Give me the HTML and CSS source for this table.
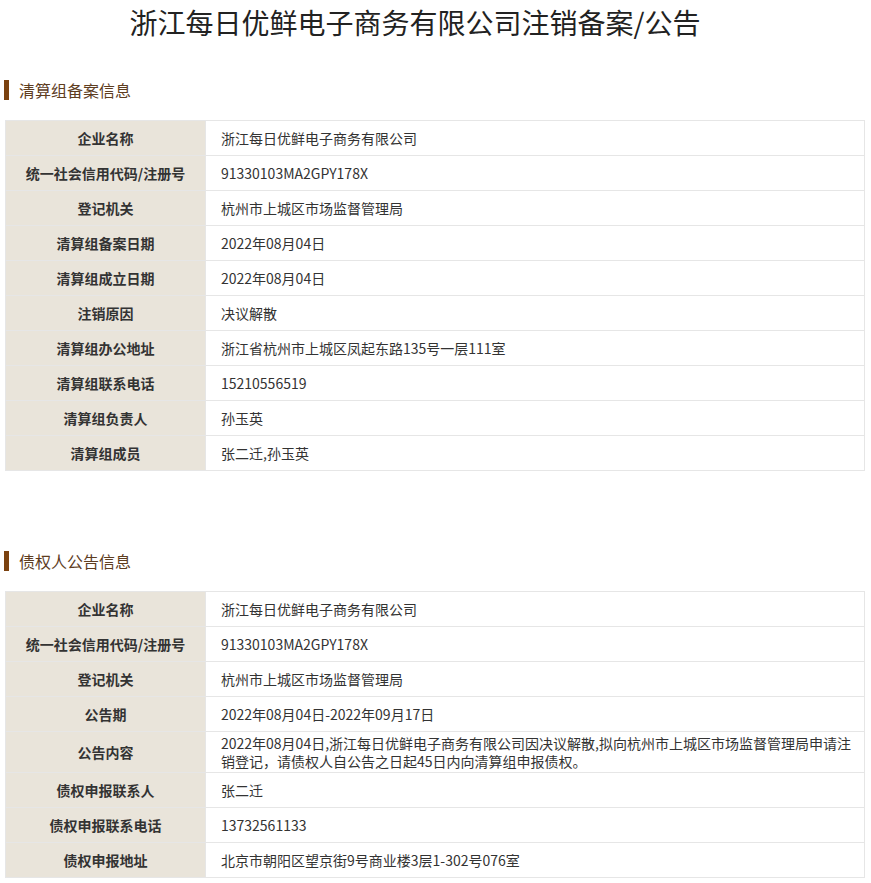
FILE: index.html
```html
<!DOCTYPE html>
<html lang="zh-CN">
<head>
  <meta charset="UTF-8">
  <title>浙江每日优鲜电子商务有限公司注销备案/公告</title>
  <link rel="stylesheet" href="styles.css">
</head>
<body>

  <h1 class="page-title">浙江每日优鲜电子商务有限公司注销备案/公告</h1>

  <!-- 清算组备案信息 -->
  <h2 class="section-title">清算组备案信息</h2>
  <table class="info-table">
    <tr><th>企业名称</th><td>浙江每日优鲜电子商务有限公司</td></tr>
    <tr><th>统一社会信用代码/注册号</th><td>91330103MA2GPY178X</td></tr>
    <tr><th>登记机关</th><td>杭州市上城区市场监督管理局</td></tr>
    <tr><th>清算组备案日期</th><td>2022年08月04日</td></tr>
    <tr><th>清算组成立日期</th><td>2022年08月04日</td></tr>
    <tr><th>注销原因</th><td>决议解散</td></tr>
    <tr><th>清算组办公地址</th><td>浙江省杭州市上城区凤起东路135号一层111室</td></tr>
    <tr><th>清算组联系电话</th><td>15210556519</td></tr>
    <tr><th>清算组负责人</th><td>孙玉英</td></tr>
    <tr><th>清算组成员</th><td>张二迁,孙玉英</td></tr>
  </table>

  <!-- 债权人公告信息 -->
  <h2 class="section-title second">债权人公告信息</h2>
  <table class="info-table">
    <tr><th>企业名称</th><td>浙江每日优鲜电子商务有限公司</td></tr>
    <tr><th>统一社会信用代码/注册号</th><td>91330103MA2GPY178X</td></tr>
    <tr><th>登记机关</th><td>杭州市上城区市场监督管理局</td></tr>
    <tr><th>公告期</th><td>2022年08月04日-2022年09月17日</td></tr>
    <tr><th>公告内容</th><td>2022年08月04日,浙江每日优鲜电子商务有限公司因决议解散,拟向杭州市上城区市场监督管理局申请注销登记，请债权人自公告之日起45日内向清算组申报债权。</td></tr>
    <tr><th>债权申报联系人</th><td>张二迁</td></tr>
    <tr><th>债权申报联系电话</th><td>13732561133</td></tr>
    <tr><th>债权申报地址</th><td>北京市朝阳区望京街9号商业楼3层1-302号076室</td></tr>
  </table>

</body>
</html>
```

FILE: styles.css
```css
body {
  margin: 0;
  font-family: "Noto Sans CJK SC", "Noto Sans", sans-serif;
  color: #333;
  background: #fff;
}

.page-title {
  width: 830px;
  margin: 0;
  padding-top: 2px;
  font-size: 28px;
  font-weight: normal;
  line-height: 40px;
  text-align: center;
  color: #222;
}

.section-title {
  margin: 38px 0 0 4px;
  padding-left: 10px;
  border-left: 5px solid #7b4210;
  font-size: 16px;
  font-weight: normal;
  line-height: 20px;
  color: #5e3d1f;
}

.section-title.second {
  margin-top: 80px;
}

.info-table {
  width: 860px;
  margin: 20px 0 0 5px;
  border-collapse: collapse;
  font-size: 14px;
}

.info-table tr {
  height: 35px;
}

.info-table th,
.info-table td {
  border: 1px solid #e6e6e6;
  padding: 2px 15px;
  line-height: 18px;
}

.info-table th {
  width: 169px;
  background: #e9e4da;
  font-weight: bold;
  text-align: center;
  color: #333;
}

.info-table td {
  padding-right: 10px;
  text-align: left;
  color: #333;
}
```
